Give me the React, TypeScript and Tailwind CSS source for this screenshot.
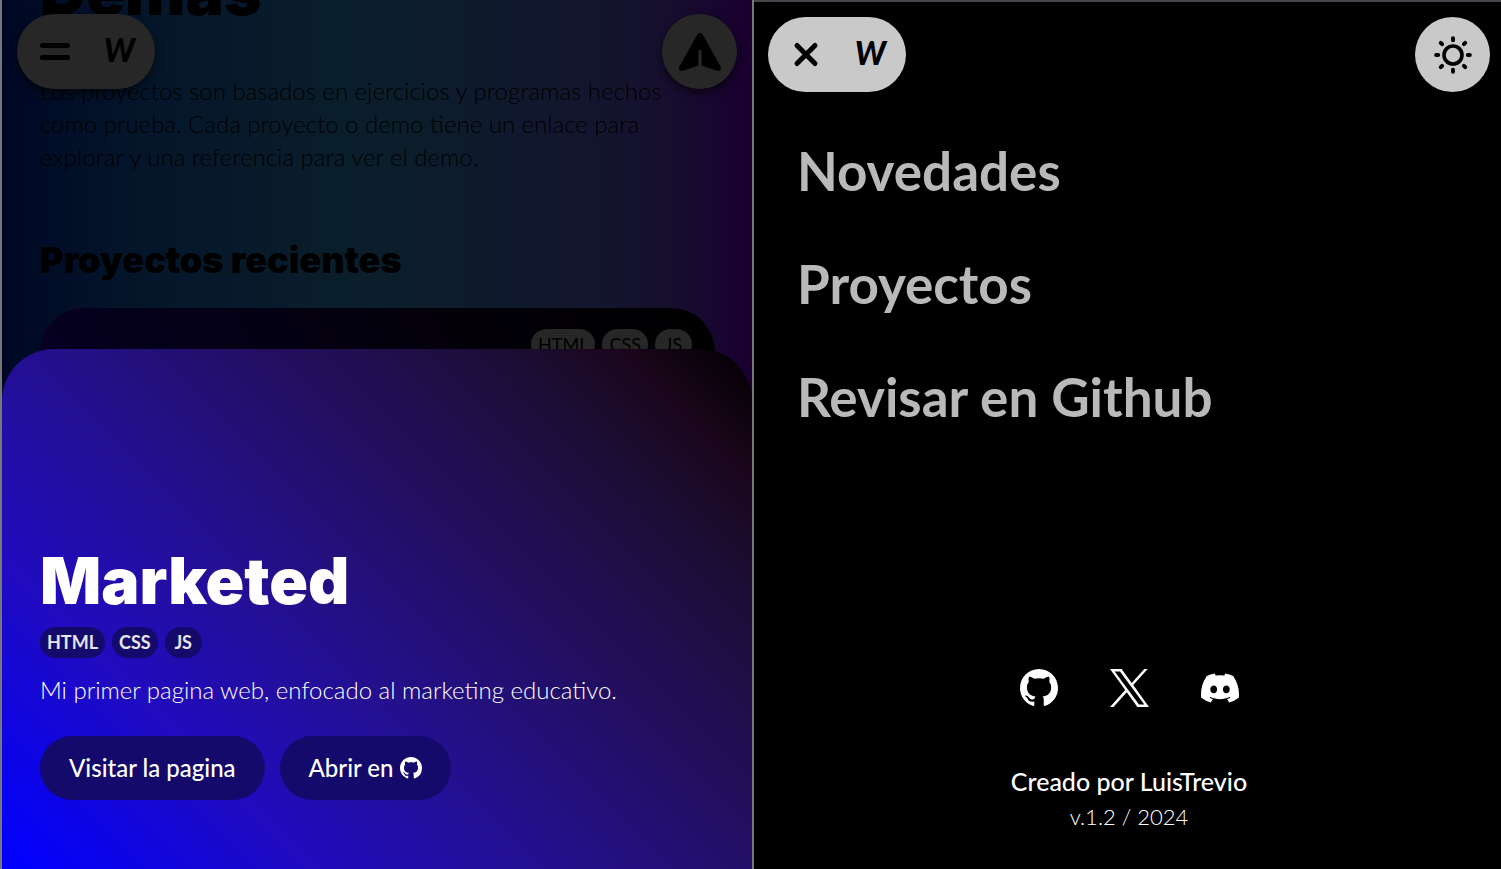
import { BsDiscord, BsGithub } from "react-icons/bs";

const tags = ["HTML", "CSS", "JS"];
const links = ["Novedades", "Proyectos", "Revisar en Github"];

function MenuIcon() {
  return (
    <svg viewBox="0 0 36 36" className="size-9" fill="none" stroke="currentColor" strokeWidth="5" strokeLinecap="round">
      <path d="M5.500 11.500H30.500M5.500 23.500H30.500" />
    </svg>
  );
}

function CloseIcon() {
  return (
    <svg viewBox="0 0 36 36" className="size-9" fill="none" stroke="currentColor" strokeWidth="5" strokeLinecap="round">
      <path d="M9 8.500L27 26.500M27 8.500L9 26.500" />
    </svg>
  );
}

function ArrowIcon() {
  return (
    <svg viewBox="0 0 44 40" className="h-10 w-11" fill="currentColor">
      <path d="M19.300 2.600C20.500 .4 23.500 .4 24.700 2.600L42.600 34.400C44 37.200 41.800 39.400 39 38.700L23.600 33.600V19.300C23.600 17.200 20.400 17.200 20.400 19.300V33.600L5 38.700C2.200 39.400 0 37.200 1.400 34.400Z" />
    </svg>
  );
}

function SunIcon() {
  return (
    <svg viewBox="0 0 40 40" className="size-10" fill="none" stroke="currentColor" strokeLinecap="round">
      <circle cx="20" cy="20" r="9" strokeWidth="3.600" />
      <path
        strokeWidth="4"
        d="M20 3.200v2M20 34.800v2M3.200 20h2M34.800 20h2M7.800 7.800l1.300 1.300M30.900 30.900l1.300 1.300M7.800 32.200l1.300-1.300M30.900 9.100l1.300-1.300"
      />
    </svg>
  );
}

function XLogo() {
  return (
    <svg viewBox="0 0 1200 1227" className="h-[38px] w-[39px]" preserveAspectRatio="none" fill="currentColor">
      <path d="M714.163 519.284L1160.89 0H1055.03L667.137 450.887L357.328 0H0L468.492 681.821L0 1226.37H105.866L515.491 750.218L842.672 1226.37H1200L714.137 519.284H714.163ZM569.165 687.828L521.697 619.934L144.011 79.694H306.615L611.412 515.685L658.88 583.579L1055.08 1150.3H892.476L569.165 687.854V687.828Z" />
    </svg>
  );
}

function Tags({ className }: { className: string }) {
  return (
    <ul className="flex gap-[7px]">
      {tags.map((tag) => (
        <li
          key={tag}
          className={`flex h-[31px] min-w-[37px] items-center justify-center rounded-full px-[7px] pb-px font-[Lato] text-lg leading-6 ${className}`}
        >
          {tag}
        </li>
      ))}
    </ul>
  );
}

function DemosPane() {
  return (
    <section className="relative h-full overflow-hidden border-x-2 border-[#777] bg-[linear-gradient(90deg,#000724_0%,#04152a_17%,#0a1f2b_48%,#13152e_80%,#170d2e_90%,#1a0030_99%)] text-black">
      <div className="-mt-[46px] pr-[37px] pl-[38px]">
        <h1 className="text-[64px] leading-[76px] font-black">Demás</h1>
        <p className="mt-11 font-[Lato] text-2xl leading-[33px] font-light">
          Los proyectos son basados en ejercicios y programas hechos como prueba. Cada proyecto o demo tiene un enlace para
          explorar y una referencia para ver el demo.
        </p>
        <h2 className="mt-[63px] text-4xl leading-[48px] font-black">Proyectos recientes</h2>
        <article className="mt-6 flex h-[400px] items-start justify-end rounded-[44px] bg-[linear-gradient(60deg,#0a0030,#05001a_35%,#030008_75%,#000)] px-[23px] py-[21px]">
          <Tags className="bg-[#272727] text-black" />
        </article>
      </div>

      <header className="absolute inset-x-[15px] top-[14px] flex justify-between">
        <nav className="flex h-[75px] w-[138px] items-center justify-between rounded-full bg-[#272727] px-5 shadow-[0_4px_10px_rgba(0,0,0,0.6)]">
          <button type="button" aria-label="Abrir menú">
            <MenuIcon />
          </button>
          <a href="#inicio" className="pb-1 font-[Lato] text-[32px] leading-10 font-black italic">
            W
          </a>
        </nav>
        <button
          type="button"
          aria-label="Subir"
          className="flex size-[75px] items-center justify-center rounded-full bg-[#272727] shadow-[0_4px_10px_rgba(0,0,0,0.6)]"
        >
          <ArrowIcon />
        </button>
      </header>

      <article className="absolute inset-x-0 bottom-0 flex h-[520px] flex-col justify-end rounded-t-[52px] bg-[linear-gradient(45deg,#0000ff_1%,#200bc0_24%,#24108f_43%,#220f62_61%,#1c0e38_79%,#1a061b_90%,#000_100%)] px-[38px] pb-[69px] text-white">
        <h2 className="text-[64px] leading-[76px] font-black">Marketed</h2>
        <div className="mt-2">
          <Tags className="bg-[#130a6c] font-bold text-white/90" />
        </div>
        <p className="mt-[15px] font-[Lato] text-2xl leading-[33px] font-light">
          Mi primer pagina web, enfocado al marketing educativo.
        </p>
        <div className="mt-[30px] flex gap-[15px]">
          <a href="#visitar" className="flex h-16 items-center rounded-full bg-[#130a6c] px-[29px] font-[Lato] text-2xl font-medium">
            Visitar la pagina
          </a>
          <a href="#github" className="flex h-16 items-center gap-1.5 rounded-full bg-[#130a6c] px-[29px] font-[Lato] text-2xl font-medium">
            Abrir en <BsGithub className="size-[22px]" aria-label="Github" />
          </a>
        </div>
      </article>
    </section>
  );
}

function MenuPane() {
  return (
    <section className="flex h-full flex-col border-t-2 border-[#47464c] bg-black pt-[15px] pr-[11px] pl-[14px] font-[Lato] text-white">
      <header className="flex justify-between text-black">
        <nav className="flex h-[75px] w-[138px] items-center justify-between rounded-full bg-[#c9c9c9] px-5">
          <button type="button" aria-label="Cerrar menú">
            <CloseIcon />
          </button>
          <a href="#inicio" className="pb-1 text-[32px] leading-10 font-black italic">
            W
          </a>
        </nav>
        <button
          type="button"
          aria-label="Cambiar tema"
          className="flex size-[75px] items-center justify-center rounded-full bg-[#c9c9c9]"
        >
          <SunIcon />
        </button>
      </header>
      <ul className="mt-[43px] flex flex-col gap-[41px] px-[29px] text-[53px] leading-[72px] font-bold text-[#b9b9b9]">
        {links.map((link) => (
          <li key={link}>
            <a href="#menu">{link}</a>
          </li>
        ))}
      </ul>
      <footer className="mt-auto flex flex-col items-center pb-[34px] leading-9">
        <div className="mb-14 flex items-center gap-[52px]">
          <a href="#github" aria-label="Github">
            <BsGithub className="size-[38px]" />
          </a>
          <a href="#x" aria-label="X">
            <XLogo />
          </a>
          <a href="#discord" aria-label="Discord">
            <BsDiscord className="size-[38px]" />
          </a>
        </div>
        <p className="text-[25px] leading-9 font-medium">Creado por LuisTrevio</p>
        <p className="text-[22px] leading-9 font-light">v.1.2 / 2024</p>
      </footer>
    </section>
  );
}

export default function App() {
  return (
    <main className="grid h-screen grid-cols-[754fr_747fr] overflow-hidden bg-black font-[Inter,sans-serif]">
      <DemosPane />
      <MenuPane />
    </main>
  );
}
